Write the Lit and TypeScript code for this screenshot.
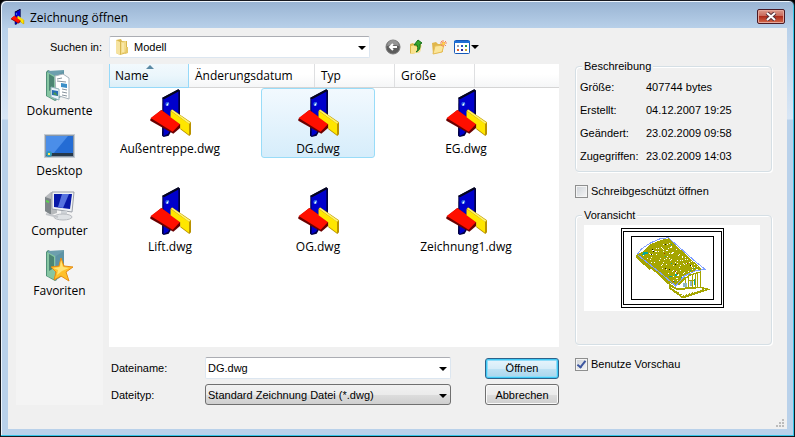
import { LitElement, html, svg, css } from "lit";
import { customElement, property, state } from "lit/decorators.js";
import { classMap } from "lit/directives/class-map.js";

const arrow = html`<svg class="arrow" width="8" height="4" viewBox="0 0 8 4" aria-hidden="true"><path d="M0 0H8L4 4Z" fill="#000" /></svg>`;

const doorShapes = svg`
  <path d="M133 296L181 271L186 275V352L152 410L137 414L132 410Z" fill="#000044" />
  <path d="M136 299L181 275V350L150 404L137 411Z" fill="#0000cc" />
  <path d="M132 297L181 271L186 275L138 301Z" fill="#05051c" />
  <path d="M97 360L130 333L188 376L187 386L166 404L97 365Z" fill="#6a0000" />
  <path d="M98 357L130 333L187 374L164 398Z" fill="#ff0f00" />
  <path d="M158 335L162 331L219 370V406L214 411L187 391V376L158 355Z" fill="#b99200" />
  <path d="M158 336L213 374V407L187 388V376L158 355Z" fill="#ffe600" />
  <path d="M159 335L163 332L218 371L213 374Z" fill="#fff36a" />
  <circle cx="148" cy="315" r="6" fill="#2b6be8" />
  <path d="M144 319L152 310L149 320Z" fill="#fff" />`;

const door = (w: number, h: number) => html`<svg width=${w} height=${h} viewBox="90 270 135 147" aria-hidden="true">${doorShapes}</svg>`;

const folderBase = svg`
  <path d="M2 3L4 1L13 5V31L11 32L2 27Z" fill="#4f8f78" />
  <path d="M4 2L20 1V26L12 31L4 26Z" fill="#6d9fae" />
  <path d="M3 3L11 7V31L3 27Z" fill="#86c6a2" />
  <path d="M5 5L10 8V19L5 22Z" fill="#4b8573" />
  <path d="M12 7L20 2V25L12 31Z" fill="#5d93a5" />`;

const placeIcons: Record<string, unknown> = {
  docs: svg`${folderBase}
    <path d="M11 7L19 5L25 9V30L12 26Z" fill="#fff" stroke="#a7b2bb" />
    <path d="M13 10L18 9M13 12L22 13M18 20L23 21M18 23L23 24M18 26L23 27" stroke="#87939e" />
    <path d="M17 14L23 15V19L17 18Z" fill="#3c8fc8" />
    <path d="M7 18L15 20V31L7 28Z" fill="#eaf5fa" stroke="#91b4ba" />
    <path d="M8 21L14 22V27L8 26Z" fill="#286fb4" /><path d="M9 25L11 23L14 27Z" fill="#4a9c51" />`,
  desktop: svg`
    <rect x="0" y="5" width="31" height="24" fill="#c4cbd2" />
    <rect x="1" y="6" width="29" height="22" fill="#8b98a6" />
    <rect x="2" y="7" width="27" height="18" fill="#246cd4" />
    <path d="M2 7H24L9 25H2Z" fill="#4b8ee9" />
    <rect x="2" y="24" width="27" height="3" fill="#26384a" />
    <circle cx="5" cy="25" r="3" fill="#2f99b7" /><path d="M4 24H6V26H4Z" fill="#ffe65b" />`,
  computer: svg`
    <path d="M1 8L7 3L13 5V24L7 26L1 22Z" fill="#b7babd" />
    <path d="M1 8L7 10V26L1 22Z" fill="#7d8488" /><path d="M2 11L5 12V14L2 13Z" fill="#5bd34e" />
    <path d="M8 3L30 3L28 23L8 20Z" fill="#eef1f4" stroke="#9a9fa8" />
    <path d="M10 5L28 5L26 20L10 18Z" fill="#0718a8" />
    <path d="M18 5H25L19 19L14 18Z" fill="#5672df" />
    <path d="M17 22H23V27H17Z" fill="#cfd3d7" />
    <ellipse cx="19" cy="28" rx="9" ry="3" fill="#dfe2e5" stroke="#b8bbc0" />
    <path d="M2 25L14 28" stroke="#c4c7cb" stroke-width="2" />`,
  favorites: svg`${folderBase}
    <path d="M17 9L20 17L29 18L22 23L25 32L17 27L10 31L12 23L7 18L15 17Z" fill="#ffc02a" stroke="#e68c12" />
    <path d="M17 11L19 18L25 19L18 22L13 26L14 21L9 19L16 18Z" fill="#ffe475" />`,
};

/* Small deterministic generator, so the speckle of the model stays the same */
const speckle = (() => {
  let seed = 41;
  const next = () => (seed = (seed * 16807) % 2147483647) / 2147483647;
  return Array.from({ length: 130 }, () => {
    const a = next();
    const b = next();
    const t = next();
    return {
      x: Math.round((80 + a * 98 + b * 78) / 3) * 3,
      y: Math.round((98 + a * 82 - b * 42) / 3) * 3,
      c: t < 0.84 ? "#fff" : t < 0.91 ? "#00a8a0" : t < 0.96 ? "#a83000" : "#101010",
    };
  });
})();

@customElement("model-preview")
export class ModelPreview extends LitElement {
  static styles = css`
    :host { display: flex; justify-content: center; align-items: center; background: #fff; height: 86px; }
  `;
  render() {
    return html`<svg width="103" height="80" viewBox="18 18 309 240" role="img" aria-label="Modell">
      <g fill="none" stroke="#000" stroke-width="3" shape-rendering="crispEdges">
        <rect x="19.5" y="19.5" width="306" height="237" />
        <rect x="25.5" y="28.5" width="294" height="219" />
        <rect x="49.5" y="43.5" width="246" height="189" />
      </g>
      <g shape-rendering="crispEdges">
        <path d="M64 98L82 90L106 67L135 55L160 49L262 143L222 152L185 192L166 184L64 108Z" fill="#a5a500" />
        <path d="M66 106L106 142M120 146L172 194" fill="none" stroke="#a5a500" stroke-width="6" />
        <path d="M164 190L187 202L256 196L280 202L204 227L164 198Z" fill="#fff" stroke="#a5a500" stroke-width="5" />
        <path d="M172 202L204 222L270 202" fill="none" stroke="#a5a500" stroke-width="4" stroke-dasharray="6 3" />
        <path d="M188 188L222 158L256 148V194L188 200Z" fill="#fff" />
        <path d="M188 190L222 160L256 150M212 164V198M220 160V198M232 156V196M241 153V194M247 150V194M256 146V196M188 200L258 196M222 176H240" fill="none" stroke="#a5a500" stroke-width="4" />
        <path d="M204 182H215V196H204ZM226 176H230V192H226Z" fill="#8fb5c0" />
        <path d="M238 172V190" stroke="#00a8a0" stroke-width="3" />
        ${speckle.map((s) => svg`<rect x=${s.x} y=${s.y} width="3" height="3" fill=${s.c} />`)}
        <path d="M85 91H100V95H91V98H82ZM162 163H171V166H162ZM180 157H187V161H180Z" fill="#00a8a0" />
        <path d="M68 96L80 80L108 62L136 50L160 47L200 82L236 114L270 142L240 147L208 162L182 192L140 156L70 100" fill="none" stroke="#809fff" stroke-width="3" />
      </g>
    </svg>`;
  }
}

@customElement("file-tile")
export class FileTile extends LitElement {
  @property() name = "";
  @property({ type: Boolean }) selected = false;
  static styles = css`
    :host { display: block; }
    .tile {
      display: flex; flex-direction: column; align-items: center; gap: 1px;
      box-sizing: border-box; width: 100%; height: 70px; padding: 0;
      border: 1px solid transparent; border-radius: 3px; background: none;
      font: 12px/20px "Open Sans", "Noto Sans", sans-serif; color: #000;
    }
    .tile svg { flex: none; }
    .selected { border-color: #99dcf8; background: linear-gradient(#f2f9fe, #d6edfb); }
  `;
  render() {
    return html`<button class=${classMap({ tile: true, selected: this.selected })} aria-pressed=${this.selected}>
      ${door(45, 49)}<span>${this.name}</span>
    </button>`;
  }
}

@customElement("app-root")
export class AppRoot extends LitElement {
  @state() private current = "DG.dwg";

  private files = ["Außentreppe.dwg", "DG.dwg", "EG.dwg", "Lift.dwg", "OG.dwg", "Zeichnung1.dwg"];
  private columns = ["Name", "Änderungsdatum", "Typ", "Größe"];
  private places = [
    ["docs", "Dokumente"],
    ["desktop", "Desktop"],
    ["computer", "Computer"],
    ["favorites", "Favoriten"],
  ];
  private facts = [
    ["Größe:", "407744 bytes"],
    ["Erstellt:", "04.12.2007 19:25"],
    ["Geändert:", "23.02.2009 09:58"],
    ["Zugegriffen:", "23.02.2009 14:03"],
  ];

  static styles = css`
    :host { display: block; background: #000; font: 11px/14px "Liberation Sans", Arial, sans-serif; color: #000; }
    button, input, select { font: inherit; color: inherit; margin: 0; }
    .window {
      display: flex; flex-direction: column; box-sizing: border-box; min-height: 100vh;
      padding: 0 7px 7px; border: 1px solid #17191f;
      border-radius: 6px 6px 0 0; background: linear-gradient(#98b3d2, #b9d1ea 28px, #d8e6f5 118px, #b9d1ea 119px);
      box-shadow: inset -1px -1px #35c5e8, inset 1px 1px #eef5fc;
    }
    .titlebar { display: flex; align-items: center; gap: 5px; flex: none; height: 27px; padding: 4px 2px 0; box-sizing: border-box; }
    .titlebar svg { flex: none; }
    .title { flex: 1; margin: 3px 0 0; font: 12px/18px "Open Sans", "Noto Sans", sans-serif; }
    .app { margin-top: 3px; }
    .close {
      display: flex; align-items: center; justify-content: center; width: 28px; height: 15px; padding: 0;
      border: 1px solid #4b1a24; border-radius: 2px; box-shadow: inset 0 0 0 1px #e5a79b;
      background: linear-gradient(#dc9a8c, #c9695b 45%, #ae2c1c 50%, #d4694a);
    }
    .body {
      position: relative; flex: 1; display: grid; background: #f0f0f0;
      grid-template-columns: 87px minmax(0, 1fr) 197px; grid-template-rows: 22px minmax(0, 1fr);
      gap: 6px; padding: 8px 15px 24px 8px;
    }
    .look-label { justify-self: end; padding: 4px 1px 0 0; }
    .look { display: flex; align-items: center; gap: 15px; }
    .look, .center { margin-right: 10px; }
    .field { position: relative; display: flex; }
    .field .arrow { position: absolute; right: 4px; top: 50%; margin-top: -1px; pointer-events: none; }
    .field .folder { position: absolute; left: 6px; top: 3px; pointer-events: none; }
    .look .field { flex: 0 1 261px; }
    .box {
      appearance: none; box-sizing: border-box; width: 100%; height: 22px; padding: 0 18px 0 2px;
      border: 1px solid #dce6f0; border-top-color: #abadb3; border-radius: 2px; background: #fff; outline: none;
    }
    .look .box { padding-left: 24px; }
    .box.type { height: 21px; border-color: #707070; border-radius: 3px; background: linear-gradient(#f2f2f2, #ebebeb 50%, #dddddd 51%, #cfcfcf); }
    .tools { display: flex; align-items: center; gap: 7px; }
    .tool { display: flex; align-items: center; gap: 1px; padding: 0; border: 0; background: none; }
    .places { display: flex; flex-direction: column; background: #f4f4f4; }
    .place {
      display: flex; flex-direction: column; align-items: center; gap: 1px; height: 60px; padding: 5px 0 0; border: 0;
      background: none; font: 12px/16px "Open Sans", "Noto Sans", sans-serif; box-sizing: border-box;
    }
    .place svg { flex: none; }
    .center { display: flex; flex-direction: column; gap: 10px; }
    .list { flex: 1; background: #fff; }
    .head { display: grid; grid-template-columns: 80px 126px 80px 80px 1fr; height: 24px; border-bottom: 1px solid #d5d5d5; box-sizing: border-box; background: linear-gradient(#fff, #fff 45%, #f5f6f7); }
    .col {
      position: relative; padding: 0 6px; border: 0; border-right: 1px solid #dedfe1; background: none; text-align: left;
      font: 12px/22px "Open Sans", "Noto Sans", sans-serif;
    }
    .col.sorted { padding: 0 5px; border: 1px solid #96d9f9; border-top: 0; margin-bottom: -1px; background: linear-gradient(#f2f9fd, #ebf6fc 50%, #dceff8); }
    .col .sort { position: absolute; left: 36px; top: 1px; }
    .files { display: grid; grid-template-columns: repeat(auto-fill, 114px); gap: 28px 34px; padding: 0 4px; }
    .form {
      display: grid; grid-template-columns: 94px minmax(0, 246px) 1fr; align-items: center;
      row-gap: 5px; padding-left: 2px;
    }
    .push {
      justify-self: end; width: 74px; height: 21px; padding: 0; border: 1px solid #707070; border-radius: 3px;
      box-shadow: inset 0 0 0 1px #fafafa; background: linear-gradient(#f2f2f2, #ebebeb 50%, #dddddd 51%, #cfcfcf);
    }
    .push.primary { border-color: #2c628b; box-shadow: inset 0 0 0 1px #3fc9f5, inset 0 0 0 2px #8fdcf8; background: linear-gradient(#e8f5fc, #d5ecf8 50%, #bee2f4 51%, #a9d5ec); }
    .side { grid-column: 3; grid-row: 1 / 3; margin-top: 22px; display: flex; flex-direction: column; }
    .group { margin: 0; padding: 0 8px; border: 1px solid #d5dfe5; border-radius: 4px; box-shadow: inset 1px 1px #fff, 1px 1px #fff; box-sizing: border-box; min-width: 0; }
    .group legend { padding: 0 2px; margin-left: -2px; background: #f0f0f0; line-height: 16px; }
    .facts { display: grid; grid-template-columns: 66px 1fr; row-gap: 9px; height: 97px; margin: 0 -4px; padding-top: 6px; box-sizing: border-box; align-content: start; }
    .facts dt, .facts dd { margin: 0; }
    .check { display: flex; align-items: center; gap: 3px; height: 14px; }
    .check input {
      appearance: none; position: relative; flex: none; width: 13px; height: 13px; margin: 0; border: 1px solid #8e8f8f;
      box-shadow: inset 0 0 0 1px #f4f4f4; background: linear-gradient(135deg, #cdd2d8, #f6f6f6);
    }
    .check input:checked::after {
      content: ""; position: absolute; left: 3px; top: 0; width: 3px; height: 7px;
      border: solid #3c56a0; border-width: 0 2px 2px 0; transform: rotate(38deg);
    }
    .first { margin: 12px 0 9px; }
    .second { margin-top: 12px; }
    .preview { height: 119px; }
    .preview model-preview { margin: 2px 3px 0 0; }
    .grip { position: absolute; right: 3px; bottom: 2px; }
  `;

  render() {
    return html`<main class="window">
      <header class="titlebar">
        <span class="app">${door(15, 16)}</span>
        <h1 class="title">Zeichnung öffnen</h1>
        <button class="close" aria-label="Schließen">
          <svg width="12" height="9" viewBox="0 0 12 9"><path d="M2 1L10 8M10 1L2 8" stroke="#57303a" stroke-width="4" /><path d="M2 1L10 8M10 1L2 8" stroke="#fff" stroke-width="2" /></svg>
        </button>
      </header>
      <div class="body">
        <label class="look-label" for="look">Suchen in:</label>
        <div class="look">
          <div class="field">
            <select class="box" id="look"><option>Modell</option></select>
            <svg class="folder" width="14" height="16" viewBox="0 0 14 16" aria-hidden="true">
              <path d="M1 1L6 0L7 2L12 2V14L5 16L1 14Z" fill="#d9b84f" />
              <path d="M1 1L5 3V16L1 14Z" fill="#f6e3a0" /><path d="M6 3L11 2V13L6 15Z" fill="#f3dc8c" />
              <path d="M11 8H13V14L10 15Z" fill="#e6c96a" /><path d="M8 4V13" stroke="#fff4c4" />
            </svg>
            ${arrow}
          </div>
          <div class="tools">
            <button class="tool" aria-label="Zurück">
              <svg width="16" height="16" viewBox="0 0 16 16"><circle cx="8" cy="8" r="7" fill="#5c5c5c" stroke="#7a7a7a" /><path d="M2 7A6 6 0 0 1 14 7Q8 5 2 7Z" fill="#959595" /><path d="M12 8H6M8 5L5 8L8 11" fill="none" stroke="#fff" stroke-width="2" /></svg>
            </button>
            <button class="tool" aria-label="Übergeordneter Ordner">
              <svg width="16" height="16" viewBox="0 0 16 16"><path d="M2 5L5 4L7 6L13 4L12 13L3 15L2 14Z" fill="#d9b446" /><path d="M3 7L7 6L8 8L14 6L12 13L3 15Z" fill="#f9e28e" /><path d="M8 13Q11 11 9 6L6 6L10 1L14 4L12 5Q13 11 8 13Z" fill="#35a52e" stroke="#14701a" /></svg>
            </button>
            <button class="tool" aria-label="Neuer Ordner">
              <svg width="16" height="16" viewBox="0 0 16 16"><path d="M1 4L5 3L7 5H12V13L2 15Z" fill="#e0b64a" /><path d="M4 7L13 6L11 13L2 15Z" fill="#fbe69a" stroke="#e5bd57" /><path d="M12 1V8M9 4H16M10 2L15 7M15 2L10 7" stroke="#f2885a" /><circle cx="12.5" cy="4.5" r="1.5" fill="#ffd24a" /></svg>
            </button>
            <button class="tool" aria-label="Ansicht">
              <svg width="16" height="14" viewBox="0 0 16 14"><rect x=".5" y=".5" width="15" height="13" rx="1" fill="#fff" stroke="#1659b8" /><path d="M0 1H16V3H0Z" fill="#1f6fd6" /><path d="M3 5H5V7H3Z" fill="#8fa1b8" /><path d="M7 5H9V7H7Z" fill="#2a55c0" /><path d="M11 5H13V7H11Z" fill="#23964a" /><path d="M3 9H5V11H3Z" fill="#e0632e" /><path d="M7 9H9V11H7Z" fill="#2a2aa0" /><path d="M11 9H13V11H11Z" fill="#caa52c" /></svg>
              ${arrow}
            </button>
          </div>
        </div>
        <nav class="places">
          ${this.places.map(([icon, label]) => html`<button class="place"><svg width="32" height="33" viewBox="0 0 32 33" aria-hidden="true">${placeIcons[icon]}</svg>${label}</button>`)}
        </nav>
        <section class="center">
          <div class="list">
            <div class="head">
              ${this.columns.map((c, i) => html`<button class=${classMap({ col: true, sorted: i === 0 })}>${c}${i === 0 ? html`<svg class="sort" width="8" height="4" viewBox="0 0 8 4"><path d="M0 4L4 0L8 4Z" fill="#5c8aa5" /></svg>` : ""}</button>`)}
            </div>
            <div class="files">
              ${this.files.map((f) => html`<file-tile .name=${f} .selected=${f === this.current} @click=${() => (this.current = f)}></file-tile>`)}
            </div>
          </div>
          <div class="form">
            <label for="name">Dateiname:</label>
            <div class="field"><input class="box" id="name" .value=${this.current} />${arrow}</div>
            <button class="push primary">Öffnen</button>
            <label for="type">Dateityp:</label>
            <div class="field"><select class="box type" id="type"><option>Standard Zeichnung Datei (*.dwg)</option></select>${arrow}</div>
            <button class="push">Abbrechen</button>
          </div>
        </section>
        <aside class="side">
          <fieldset class="group">
            <legend>Beschreibung</legend>
            <dl class="facts">${this.facts.map(([k, v]) => html`<dt>${k}</dt><dd>${v}</dd>`)}</dl>
          </fieldset>
          <label class="check first"><input type="checkbox" />Schreibgeschützt öffnen</label>
          <fieldset class="group">
            <legend>Voransicht</legend>
            <div class="preview"><model-preview></model-preview></div>
          </fieldset>
          <label class="check second"><input type="checkbox" checked />Benutze Vorschau</label>
        </aside>
        <svg class="grip" width="8" height="8" viewBox="0 0 8 8" aria-hidden="true"><path d="M6 0H8V2H6ZM3 3H5V5H3ZM6 3H8V5H6ZM0 6H2V8H0ZM3 6H5V8H3ZM6 6H8V8H6Z" fill="#bcbcbc" /></svg>
      </div>
    </main>`;
  }
}
